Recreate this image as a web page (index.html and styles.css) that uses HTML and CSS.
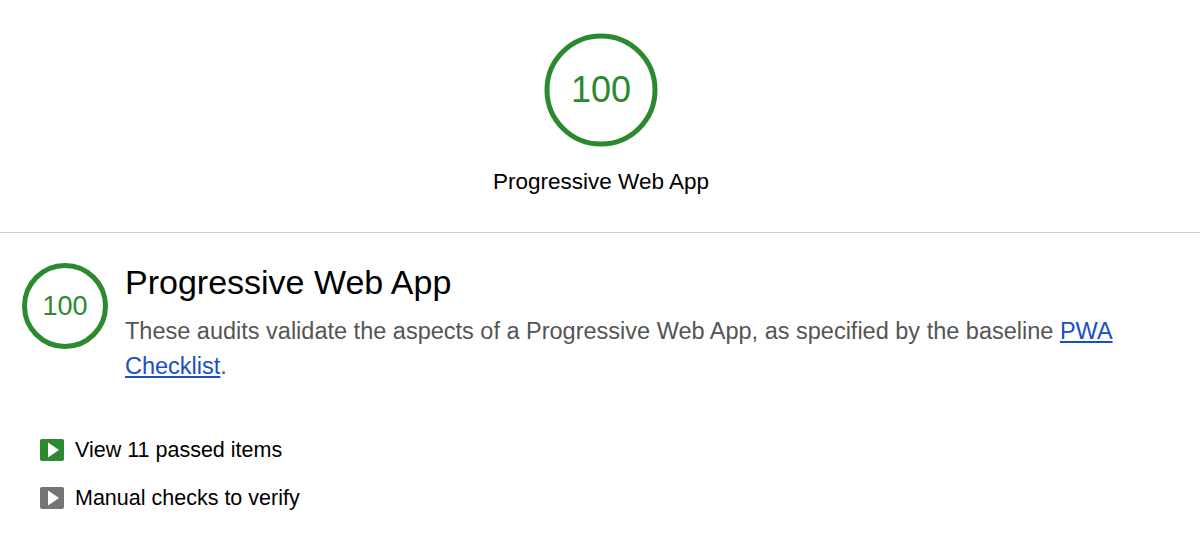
FILE: index.html
```html
<!DOCTYPE html>
<html>
<head>
<meta charset="utf-8">
<link rel="stylesheet" href="styles.css">
</head>
<body>
<header class="summary">
  <div class="gauge gauge-lg">
    <svg viewBox="0 0 114 114" width="114" height="114"><circle cx="57" cy="57" r="54" fill="none" stroke="#2b8a2f" stroke-width="5"/></svg>
    <span class="gauge-score">100</span>
  </div>
  <div class="summary-label">Progressive Web App</div>
</header>
<section class="category">
  <div class="category-head">
    <div class="gauge gauge-sm">
      <svg viewBox="0 0 86 86" width="86" height="86"><circle cx="43" cy="43" r="40.5" fill="none" stroke="#2b8a2f" stroke-width="5"/></svg>
      <span class="gauge-score">100</span>
    </div>
    <div class="category-text">
      <h1 class="category-title">Progressive Web App</h1>
      <p class="category-desc">These audits validate the aspects of a Progressive Web App, as specified by the baseline <a href="#">PWA Checklist</a>.</p>
    </div>
  </div>
  <ul class="groups">
    <li class="group"><span class="toggle toggle-pass"><svg viewBox="0 0 24 22" width="24" height="22"><path d="M8 3.5 L19 11 L8 18.5 Z" fill="#fff"/></svg></span>View 11 passed items</li>
    <li class="group"><span class="toggle toggle-manual"><svg viewBox="0 0 24 22" width="24" height="22"><path d="M8 3.5 L19 11 L8 18.5 Z" fill="#fff"/></svg></span>Manual checks to verify</li>
  </ul>
</section>
</body>
</html>
```
FILE: styles.css
```css
* { box-sizing: border-box; }
html, body { margin: 0; padding: 0; background: #fff; }
body {
  font-family: "Liberation Sans", Arial, sans-serif;
  color: #000;
  width: 1200px;
  height: 552px;
  overflow: hidden;
}
.summary {
  height: 233px;
  border-bottom: 1px solid #cfcfcf;
  display: flex;
  flex-direction: column;
  align-items: center;
  padding-top: 33px;
  padding-left: 2px;
}
.gauge {
  position: relative;
  display: flex;
  align-items: center;
  justify-content: center;
  color: #2b8a2f;
}
.gauge svg { display: block; }
.gauge-score {
  position: absolute;
  inset: 0;
  display: flex;
  align-items: center;
  justify-content: center;
}
.gauge-lg .gauge-score { font-size: 36px; }
.gauge-sm .gauge-score { font-size: 27px; }
.summary-label {
  margin-top: 22px;
  font-size: 22.5px;
  line-height: 26px;
}
.category {
  padding: 30px 0 0 22px;
}
.category-head {
  display: flex;
  align-items: flex-start;
  gap: 17px;
}
.category-text { flex: 1; padding-right: 40px; }
.category-title {
  margin: 0;
  font-size: 34px;
  font-weight: normal;
  line-height: 38px;
}
.category-desc {
  margin: 13px 0 0;
  font-size: 23.5px;
  line-height: 35px;
  color: #555;
}
.category-desc a { color: #1a4fc4; }
.groups {
  list-style: none;
  margin: 54px 0 0;
  padding: 0 0 0 18px;
  display: flex;
  flex-direction: column;
  gap: 24px;
}
.group {
  display: flex;
  align-items: center;
  gap: 11px;
  font-size: 21.5px;
  line-height: 24px;
}
.toggle {
  display: block;
  width: 24px;
  height: 22px;
  border-radius: 2px;
}
.toggle svg { display: block; }
.toggle-pass { background: #2b8a2f; }
.toggle-manual { background: #757575; }
```
